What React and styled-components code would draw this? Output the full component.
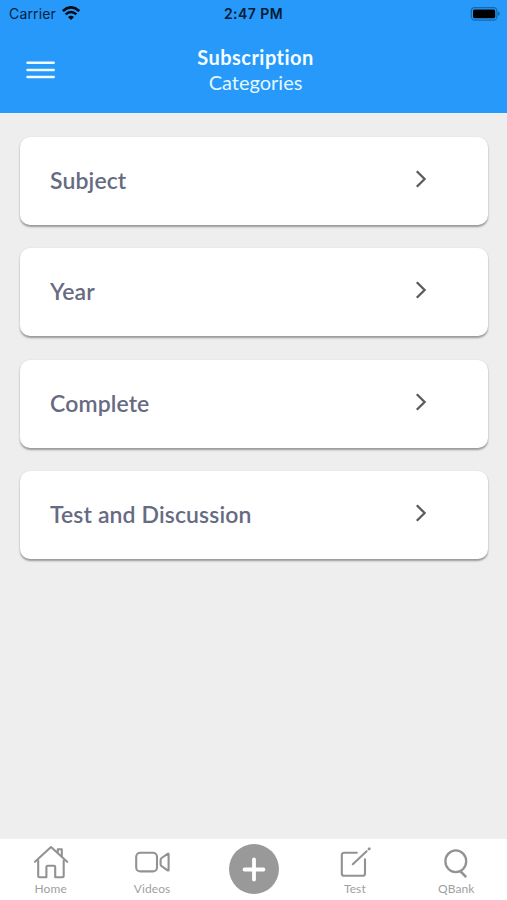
import React from "react";
import styled, { createGlobalStyle } from "styled-components";

const GlobalStyle = createGlobalStyle`
  * {
    box-sizing: border-box;
  }
  body {
    margin: 0;
    font-family: Lato, "Open Sans", sans-serif;
    font-variant-ligatures: none;
  }
`;

const Screen = styled.div`
  height: 100vh;
  display: flex;
  flex-direction: column;
  overflow: hidden;
  background-color: #eeeeee;
`;

const Header = styled.header`
  height: 113px;
  flex-shrink: 0;
  background-color: #2699fb;
`;

const StatusBar = styled.div`
  height: 27px;
  padding: 0 7px 0 9px;
  display: grid;
  grid-template-columns: 1fr auto 1fr;
  align-items: center;
  font-family: Inter, sans-serif;
  font-size: 14px;
  color: #06213c;
`;

const Carrier = styled.div`
  display: flex;
  align-items: center;
  gap: 6px;
  letter-spacing: 0.15px;
`;

const Time = styled.div`
  padding-right: 2px;
  font-weight: 600;
  letter-spacing: 0.45px;
  color: #051a30;
`;

const Battery = styled.svg`
  justify-self: end;
`;

const TitleBar = styled.div`
  height: 86px;
  padding: 0 22px 0 26px;
  display: grid;
  grid-template-columns: 1fr auto 1fr;
  align-items: center;
`;

const MenuButton = styled.button`
  width: 29px;
  padding: 0;
  border: 0;
  background: none;
  display: flex;
`;

const Title = styled.h1`
  margin: 0;
  text-align: center;
  font-size: 20px;
  line-height: 25px;
  letter-spacing: ${(props) => (props.$light ? "0" : "0.45px")};
  font-weight: ${(props) => (props.$light ? 400 : 700)};
  color: ${(props) => (props.$light ? "#e4f8ff" : "#f5fdff")};
`;

const List = styled.main`
  flex: 1;
  padding: 23px 19.5px 0 20px;
  border-top: 1px solid #e6f1f8;
  display: flex;
  flex-direction: column;
  gap: 23.3px;
`;

const Card = styled.div`
  height: 88px;
  padding: 0 61px 2px 30px;
  display: flex;
  align-items: center;
  justify-content: space-between;
  border-radius: 10px;
  background-color: #ffffff;
  box-shadow: 0 1.5px 2px rgba(0, 0, 0, 0.36);
`;

const CardLabel = styled.span`
  font-size: 23px;
  font-weight: 600;
  letter-spacing: 0.12px;
  color: #666b82;
`;

const Chevron = styled.svg`
  margin-bottom: 2px;
`;

const TabBar = styled.nav`
  height: 61px;
  flex-shrink: 0;
  display: grid;
  grid-template-columns: repeat(5, 1fr);
  background-color: #ffffff;
`;

const Tab = styled.div`
  padding-top: ${(props) => (props.$raised ? "5px" : "6px")};
  padding-left: ${(props) => (props.$raised ? "1px" : "0")};
  display: flex;
  flex-direction: column;
  align-items: center;
  color: #929292;
`;

const TabLabel = styled.span`
  font-size: 12px;
  line-height: 15px;
  letter-spacing: 0.1px;
  color: #a0a0a0;
`;

const AddButton = styled.button`
  width: 50px;
  height: 50px;
  padding: 0;
  border: 0;
  border-radius: 50%;
  background-color: #999999;
`;

const TabIcon = ({ children }) => (
  <svg
    width="36"
    height="36"
    viewBox="0 0 36 36"
    fill="none"
    stroke="currentColor"
    strokeWidth={2.1}
    strokeLinecap="round"
    strokeLinejoin="round"
  >
    {children}
  </svg>
);

const tabs = [
  {
    label: "Home",
    icon: (
      <>
        <path d="M5.2 15.5V31Q5.2 32.2 6.4 32.2H13.4V22Q13.4 20.8 14.6 20.8H21Q22.2 20.8 22.2 22V32.2H29.5Q30.7 32.2 30.7 31V15.5" />
        <path d="M2 16.8L18 2L34.2 16.8" />
        <path d="M24.8 7.5V4.3H28.8V11.5" />
      </>
    ),
  },
  {
    label: "Videos",
    icon: (
      <>
        <rect x="2.2" y="7.8" width="20.8" height="18.6" rx="4" />
        <path d="M34.6 9.3V24.9Q34.6 26 33.6 25.3L27.6 21.2Q26.6 20.4 26.6 19.2V15Q26.6 13.8 27.6 13L33.6 8.9Q34.6 8.2 34.6 9.3Z" />
      </>
    ),
  },
  { add: true },
  {
    label: "Test",
    icon: (
      <>
        <path d="M19.8 7.8H7.2Q4.8 7.8 4.8 10.2V28.4Q4.8 30.8 7.2 30.8H25.6Q28 30.8 28 28.4V14.2" />
        <path d="M15.8 19.2L29.6 6.2" />
        <path d="M32 4L32.3 3.7" strokeWidth={2.8} />
      </>
    ),
  },
  {
    label: "QBank",
    icon: (
      <>
        <ellipse cx="17.8" cy="16.3" rx="10.4" ry="10.9" strokeWidth={2.3} />
        <path d="M21.8 25.6L28.2 32.2" strokeWidth={2.6} strokeLinecap="butt" />
      </>
    ),
  },
];

const categories = ["Subject", "Year", "Complete", "Test and Discussion"];

const App = () => {
  return (
    <Screen>
      <GlobalStyle />
      <Header>
        <StatusBar>
          <Carrier>
            Carrier
            <svg width="18" height="15" viewBox="0 0 18 15" fill="none" stroke="#020a12">
              <path d="M0.8 5.1Q9 -2.3 17.2 5.1" strokeWidth={2.7} />
              <path d="M3.6 8.4Q9 3.6 14.4 8.4" strokeWidth={2.5} />
              <path d="M9 14L6 11Q9 8.5 12 11Z" fill="#020a12" stroke="none" />
            </svg>
          </Carrier>
          <Time>2:47 PM</Time>
          <Battery width="30" height="14" viewBox="0 0 30 14">
            <rect x="1.3" y="0.5" width="25.6" height="12.6" rx="3.5" fill="none" stroke="#1769ac" strokeWidth={1.3} />
            <rect x="3" y="2.4" width="22.2" height="8.8" rx="1.6" fill="#000000" />
            <path d="M28 4.6Q30 5.3 30 6.8Q30 8.3 28 9Z" fill="#1769ac" />
          </Battery>
        </StatusBar>
        <TitleBar>
          <MenuButton aria-label="Menu">
            <svg width="29" height="20" viewBox="0 0 29 20" stroke="#f0fcff" strokeWidth={2.5} strokeLinecap="round">
              <path d="M1.5 2.7H27.7M1.5 10H27.7M1.5 17H27.7" />
            </svg>
          </MenuButton>
          <div>
            <Title>Subscription</Title>
            <Title as="div" $light>
              Categories
            </Title>
          </div>
        </TitleBar>
      </Header>

      <List>
        {categories.map((name) => (
          <Card key={name}>
            <CardLabel>{name}</CardLabel>
            <Chevron width="12" height="18" viewBox="0 0 12 18" fill="none" stroke="#5b5b5b" strokeWidth={2.3}>
              <path d="M1.8 1.3L9.6 9L1.8 16.7" />
            </Chevron>
          </Card>
        ))}
      </List>

      <TabBar>
        {tabs.map((tab) =>
          tab.add ? (
            <Tab key="add" $raised>
              <AddButton aria-label="Add">
                <svg width="50" height="50" viewBox="0 0 50 50" stroke="#ffffff" strokeWidth={3.8} strokeLinecap="round">
                  <path d="M25 15.5V35.5M15.5 25.5H34.5" />
                </svg>
              </AddButton>
            </Tab>
          ) : (
            <Tab key={tab.label}>
              <TabIcon>{tab.icon}</TabIcon>
              <TabLabel>{tab.label}</TabLabel>
            </Tab>
          )
        )}
      </TabBar>
    </Screen>
  );
};

export default App;
